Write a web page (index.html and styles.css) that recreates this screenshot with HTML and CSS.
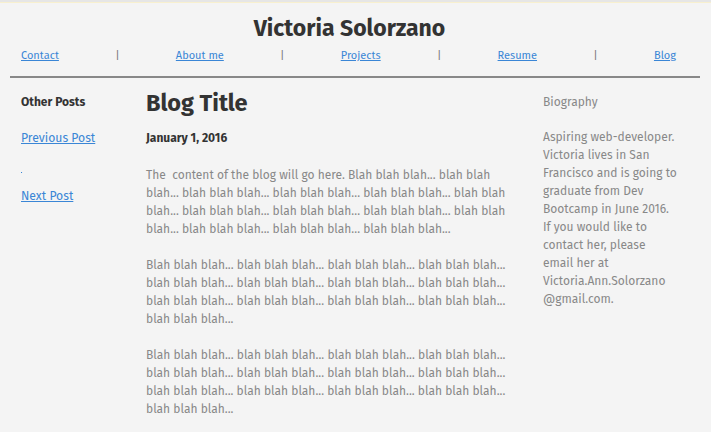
FILE: index.html
```html
<!DOCTYPE html>
<html>
<head>
<meta charset="utf-8">
<link rel="stylesheet" href="styles.css">
</head>
<body>
<div class="topline"></div>
<header class="header">
  <h1 class="name">Victoria Solorzano</h1>
  <nav class="nav">
    <a href="#">Contact</a><span class="sep">|</span>
    <a href="#">About me</a><span class="sep">|</span>
    <a href="#">Projects</a><span class="sep">|</span>
    <a href="#">Resume</a><span class="sep">|</span>
    <a href="#">Blog</a>
  </nav>
</header>
<hr class="rule">
<div class="layout">
  <aside class="side">
    <h3 class="side-title">Other Posts</h3>
    <a class="side-link" href="#">Previous Post</a>
    <a class="side-dot" href="#">&nbsp;</a>
    <a class="side-link" href="#">Next Post</a>
  </aside>
  <main class="main">
    <h2 class="post-title">Blog Title</h2>
    <div class="post-date">January 1, 2016</div>
    <p class="post-text">The &nbsp;content of the blog will go here. Blah blah blah... blah blah blah... blah blah blah... blah blah blah... blah blah blah... blah blah blah... blah blah blah... blah blah blah... blah blah blah... blah blah blah... blah blah blah... blah blah blah... blah blah blah...</p>
    <p class="post-text">Blah blah blah... blah blah blah... blah blah blah... blah blah blah... blah blah blah... blah blah blah... blah blah blah... blah blah blah... blah blah blah... blah blah blah... blah blah blah... blah blah blah... blah blah blah...</p>
    <p class="post-text">Blah blah blah... blah blah blah... blah blah blah... blah blah blah... blah blah blah... blah blah blah... blah blah blah... blah blah blah... blah blah blah... blah blah blah... blah blah blah... blah blah blah... blah blah blah...</p>
  </main>
  <aside class="bio">
    <h3 class="bio-title">Biography</h3>
    <p class="bio-text">Aspiring web-developer. Victoria lives in San Francisco and is going to graduate from Dev Bootcamp in June 2016. If you would like to contact her, please email her at Victoria.Ann.Solorzano @gmail.com.</p>
  </aside>
</div>
</body>
</html>
```
FILE: styles.css
```css
html, body {
  margin: 0;
  padding: 0;
  background: #f4f4f4;
}
body {
  font-family: "Fira Sans", Lato, "Open Sans", sans-serif;
  color: #333;
  height: 432px;
  overflow: hidden;
}
.topline {
  height: 2px;
  background: #e6e6e6;
  border-bottom: 1px solid #f8f0cf;
}
.header {
  padding-top: 12px;
}
.name {
  margin: 0;
  padding-right: 12px;
  text-align: center;
  font-size: 23px;
  line-height: 26px;
  font-weight: 700;
  color: #333;
}
.nav {
  display: flex;
  justify-content: space-between;
  align-items: center;
  padding: 0 35px 0 21px;
  margin-top: 8px;
  font-size: 11px;
  line-height: 14px;
}
.nav a {
  color: #3a86d6;
}
.sep {
  color: #777;
}
.rule {
  margin: 13px 11px 0 10px;
  border: 0;
  height: 2px;
  background: #888;
}
.layout {
  display: grid;
  grid-template-columns: 125px 365px 166px;
  padding-left: 21px;
}
.bio {
  padding-left: 32px;
}
.side-title {
  margin: 16px 0 0;
  font-size: 12px;
  line-height: 16px;
  font-weight: 700;
  color: #333;
}
.side-link, .side-dot {
  display: block;
  width: max-content;
  color: #3a86d6;
  font-size: 12.2px;
  line-height: 16px;
}
.side-link:first-of-type {
  margin-top: 20px;
}
.side-dot {
  font-size: 4px;
  line-height: 6px;
  margin-top: 21px;
}
.side-dot + .side-link {
  margin-top: 15px;
}
.post-title {
  margin: 12px 0 0;
  font-size: 23.5px;
  line-height: 26px;
  font-weight: 700;
  color: #333;
}
.post-date {
  margin-top: 14px;
  font-size: 12px;
  line-height: 16px;
  font-weight: 700;
  color: #333;
}
.post-text {
  margin: 20px 0 0;
  font-size: 12px;
  line-height: 18px;
  color: #888;
}
.post-text + .post-text {
  margin-top: 18px;
}
.bio-title {
  margin: 15px 0 0;
  font-size: 12px;
  line-height: 18px;
  font-weight: 400;
  color: #888;
}
.bio-text {
  margin: 17px 0 0;
  font-size: 12px;
  line-height: 18px;
  color: #888;
}
```
